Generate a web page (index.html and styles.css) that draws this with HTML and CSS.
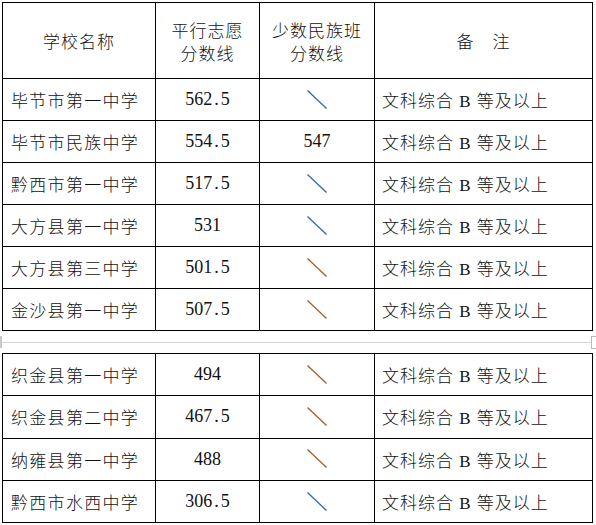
FILE: index.html
```html
<!DOCTYPE html>
<html lang="zh-CN">
<head>
<meta charset="utf-8">
<title>分数线</title>
<link rel="stylesheet" href="styles.css">
</head>
<body>
<div class="page">
  <table class="grid">
    <colgroup><col class="c1"><col class="c2"><col class="c3"><col class="c4"></colgroup>
    <tr class="head">
      <td class="ctr">学校名称</td>
      <td class="ctr">平行志愿<br>分数线</td>
      <td class="ctr">少数民族班<br>分数线</td>
      <td class="ctr">备　注</td>
    </tr>
    <tr><td class="name">毕节市第一中学</td><td class="num">562<span class="dot">.</span>5</td><td class="ctr"><svg class="slash" viewBox="0 0 20 20"><line class="blue" x1="1" y1="1" x2="19" y2="18"/></svg></td><td class="note">文科综合 B 等及以上</td></tr>
    <tr><td class="name">毕节市民族中学</td><td class="num">554<span class="dot">.</span>5</td><td class="num">547</td><td class="note">文科综合 B 等及以上</td></tr>
    <tr><td class="name">黔西市第一中学</td><td class="num">517<span class="dot">.</span>5</td><td class="ctr"><svg class="slash" viewBox="0 0 20 20"><line class="blue" x1="1" y1="1" x2="19" y2="18"/></svg></td><td class="note">文科综合 B 等及以上</td></tr>
    <tr><td class="name">大方县第一中学</td><td class="num">531</td><td class="ctr"><svg class="slash" viewBox="0 0 20 20"><line class="blue" x1="1" y1="1" x2="19" y2="18"/></svg></td><td class="note">文科综合 B 等及以上</td></tr>
    <tr><td class="name">大方县第三中学</td><td class="num">501<span class="dot">.</span>5</td><td class="ctr"><svg class="slash" viewBox="0 0 20 20"><line class="orange" x1="1" y1="1" x2="19" y2="18"/></svg></td><td class="note">文科综合 B 等及以上</td></tr>
    <tr><td class="name">金沙县第一中学</td><td class="num">507<span class="dot">.</span>5</td><td class="ctr"><svg class="slash" viewBox="0 0 20 20"><line class="orange" x1="1" y1="1" x2="19" y2="18"/></svg></td><td class="note">文科综合 B 等及以上</td></tr>
  </table>
  <div class="break">
    <span class="mark-left"></span>
    <span class="rule"></span>
    <span class="mark-right"></span>
  </div>
  <table class="grid">
    <colgroup><col class="c1"><col class="c2"><col class="c3"><col class="c4"></colgroup>
    <tr><td class="name">织金县第一中学</td><td class="num">494</td><td class="ctr"><svg class="slash" viewBox="0 0 20 20"><line class="orange" x1="1" y1="1" x2="19" y2="18"/></svg></td><td class="note">文科综合 B 等及以上</td></tr>
    <tr><td class="name">织金县第二中学</td><td class="num">467<span class="dot">.</span>5</td><td class="ctr"><svg class="slash" viewBox="0 0 20 20"><line class="orange" x1="1" y1="1" x2="19" y2="18"/></svg></td><td class="note">文科综合 B 等及以上</td></tr>
    <tr><td class="name">纳雍县第一中学</td><td class="num">488</td><td class="ctr"><svg class="slash" viewBox="0 0 20 20"><line class="orange" x1="1" y1="1" x2="19" y2="18"/></svg></td><td class="note">文科综合 B 等及以上</td></tr>
    <tr><td class="name">黔西市水西中学</td><td class="num">306<span class="dot">.</span>5</td><td class="ctr"><svg class="slash" viewBox="0 0 20 20"><line class="blue" x1="1" y1="1" x2="19" y2="18"/></svg></td><td class="note">文科综合 B 等及以上</td></tr>
  </table>
</div>
</body>
</html>
```
FILE: styles.css
```css
html, body {
  margin: 0;
  padding: 0;
  background: #fff;
}
body {
  font-family: "Liberation Serif", "Noto Sans CJK SC", serif;
  color: #111;
}
.page {
  padding: 2px 0 0 2px;
  width: 590px;
}
.grid {
  border-collapse: collapse;
  width: 590px;
  table-layout: fixed;
}
.c1 { width: 153px; }
.c2 { width: 104px; }
.c3 { width: 115px; }
.c4 { width: 218px; }
.grid td {
  border: 1px solid #000;
  height: 41px;
  padding: 0;
  font-size: 18px;
  vertical-align: middle;
  font-family: "Noto Sans CJK SC", sans-serif;
  font-weight: 300;
}
.grid tr.head td {
  height: 75px;
  line-height: 23px;
  font-size: 17px;
}
.grid td.ctr { text-align: center; }
.grid td.name {
  padding-left: 8px;
  letter-spacing: 1.3px;
  font-size: 17px;
}
.grid tr.head td.ctr {
  letter-spacing: 1px;
}
.grid td.num {
  text-align: center;
  font-family: "Liberation Serif", serif;
  font-size: 18px;
  font-weight: 400;
}
.dot {
  padding: 0 2px;
}
.grid td.note {
  padding-left: 7px;
  letter-spacing: 1px;
  font-size: 17px;
  font-family: "Liberation Serif", "Noto Sans CJK SC", serif;
}
.slash {
  width: 20px;
  height: 20px;
  display: block;
  margin: 0 auto;
}
.slash line {
  stroke-width: 1.4;
  stroke-linecap: square;
}
.slash .blue { stroke: #2f6fb8; }
.slash .orange { stroke: #a8622e; }
.break {
  height: 22px;
  display: flex;
  align-items: center;
  margin-left: -2px;
  width: 596px;
}
.rule {
  flex: 1;
  height: 1px;
  background: #d6d6d6;
}
.mark-left {
  width: 2px;
  height: 12px;
  background: #c8c8c8;
}
.mark-right {
  width: 4px;
  height: 11px;
  border: 1px solid #bbb;
  border-right: none;
}
.grid + .break + .grid tr td {
  height: 41.3px;
}
```
